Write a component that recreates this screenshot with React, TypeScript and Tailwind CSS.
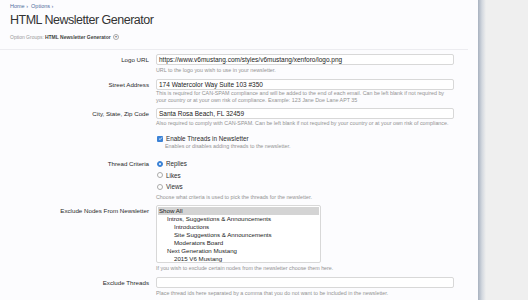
import { ReactNode } from "react";

const font = { fontFamily: '"Liberation Sans", Arial, sans-serif' };

function Row({ label, children, className = "" }: { label?: string; children: ReactNode; className?: string }) {
  return (
    <div className={`flex ${className}`}>
      <div className="w-[156px] shrink-0 pr-[7px] text-right text-[6.2px] leading-[11px] text-[#2a2a2a]">{label}</div>
      <div className="w-[298px]">{children}</div>
    </div>
  );
}

function Hint({ children, className = "mt-[1px]" }: { children: ReactNode; className?: string }) {
  return <p className={`text-[5.35px] leading-[7px] text-[#929292] ${className}`}>{children}</p>;
}

function TextBox({ value = "" }: { value?: string }) {
  return (
    <div className="h-[11px] rounded-[2px] border border-[#d8d8d8] bg-white px-[2px] text-[6.5px] leading-[9px] text-[#222]">
      {value}
    </div>
  );
}

function Radio({ label, checked }: { label: string; checked?: boolean }) {
  return (
    <div className="flex h-[11.5px] items-center gap-[3px] text-[6.3px] text-[#2a2a2a]">
      <span
        className={`flex h-[6px] w-[6px] items-center justify-center rounded-full border ${
          checked ? "border-[#3b82d6] bg-[#3b82d6]" : "border-[#aaa] bg-white"
        }`}
      >
        {checked && <span className="h-[2px] w-[2px] rounded-full bg-white" />}
      </span>
      {label}
    </div>
  );
}

const nodes = [
  { name: "Show All", depth: 0, selected: true },
  { name: "Intros, Suggestions & Announcements", depth: 1 },
  { name: "Introductions", depth: 2 },
  { name: "Site Suggestions & Announcements", depth: 2 },
  { name: "Moderators Board", depth: 2 },
  { name: "Next Generation Mustang", depth: 1 },
  { name: "2015 V6 Mustang", depth: 2 },
];

export default function App() {
  return (
    <div className="flex h-[300px] w-[528px] overflow-hidden bg-[#efefef]" style={font}>
      <div className="w-[478px] shrink-0 bg-[#fcfcfe]">
        {/* Header */}
        <div className="pl-[10px] pt-[3px]">
          <div className="text-[5.5px] leading-[7px] text-[#4f6c9c]">Home ›&nbsp;&nbsp;Options ›</div>
          <h1 className="mt-[1px] text-[12.5px] leading-[18px] tracking-[-0.5px] text-[#333]">HTML Newsletter Generator</h1>
          <div className="mt-[4px] flex items-center gap-[1px] text-[5px] leading-[8px] text-[#999]">
            Option Groups:{" "}
            <span className="font-bold text-[#444]">HTML Newsletter Generator</span>
            <span className="ml-[1px] flex h-[6px] w-[6px] items-center justify-center rounded-full border border-[#aaa] text-[4px] text-[#777]">
              ▾
            </span>
          </div>
        </div>
        <div className="mt-[8px] w-[468px] border-t border-[#ececf0]" />

        {/* Form */}
        <div className="mt-[4px]">
          <Row label="Logo URL">
            <TextBox value="https://www.v6mustang.com/styles/v6mustang/xenforo/logo.png" />
            <Hint className="mt-[1px] leading-[8px]">URL to the logo you wish to use in your newsletter.</Hint>
          </Row>
          <Row label="Street Address" className="mt-[5px]">
            <TextBox value="174 Watercolor Way Suite 103 #350" />
            <Hint className="mt-[0px]">
              This is required for CAN-SPAM compliance and will be added to the end of each email. Can be left blank if not required by
              your country or at your own risk of compliance. Example: 123 Jane Doe Lane APT 35
            </Hint>
          </Row>
          <Row label="City, State, Zip Code" className="mt-[4px]">
            <TextBox value="Santa Rosa Beach, FL 32459" />
            <Hint className="mt-[1px] whitespace-nowrap">
              Also required to comply with CAN-SPAM. Can be left blank if not required by your country or at your own risk of compliance.
            </Hint>
          </Row>
          <Row className="mt-[7px]">
            <div className="flex h-[9px] items-center gap-[3px] pl-[1px] text-[6.3px] text-[#2a2a2a]">
              <span className="flex h-[6px] w-[6px] items-center justify-center rounded-[1px] bg-[#3b82d6]">
                <svg viewBox="0 0 10 10" className="h-[5px] w-[5px]">
                  <path d="M2 5.2 4.2 7.3 8 2.8" fill="none" stroke="white" strokeWidth="1.6" />
                </svg>
              </span>
              Enable Threads in Newsletter
            </div>
            <Hint className="pl-[9px]">Enables or disables adding threads to the newsletter.</Hint>
          </Row>
          <Row label="Thread Criteria" className="mt-[8px]">
            <div className="pl-[1px]">
              <Radio label="Replies" checked />
              <Radio label="Likes" />
              <Radio label="Views" />
            </div>
            <Hint>Choose what criteria is used to pick the threads for the newsletter.</Hint>
          </Row>
          <Row label="Exclude Nodes From Newsletter" className="mt-[4px]">
            <div className="h-[58px] w-[165px] overflow-hidden rounded-[2px] border border-[#d8d8d8] bg-white p-[1px]">
              {nodes.map((n) => (
                <div
                  key={n.name}
                  className={`h-[8px] whitespace-nowrap text-[6.15px] leading-[8px] text-[#222] ${n.selected ? "bg-[#d4d4d4]" : ""} ${
                    n.depth === 1 ? "pl-[9px]" : n.depth === 2 ? "pl-[16px]" : "pl-[1px]"
                  }`}
                >
                  {n.name}
                </div>
              ))}
            </div>
            <Hint className="mt-[2px]">If you wish to exclude certain nodes from the newsletter choose them here.</Hint>
          </Row>
          <Row label="Exclude Threads" className="mt-[5px]">
            <TextBox />
            <Hint className="mt-[2px]">Place thread ids here separated by a comma that you do not want to be included in the newsletter.</Hint>
          </Row>
        </div>
      </div>
      <div className="w-[8px] shrink-0 bg-gradient-to-r from-[#a7b1bf] via-[#d3d8df] to-[#efefef]" />
      <div className="flex-1" />
    </div>
  );
}
